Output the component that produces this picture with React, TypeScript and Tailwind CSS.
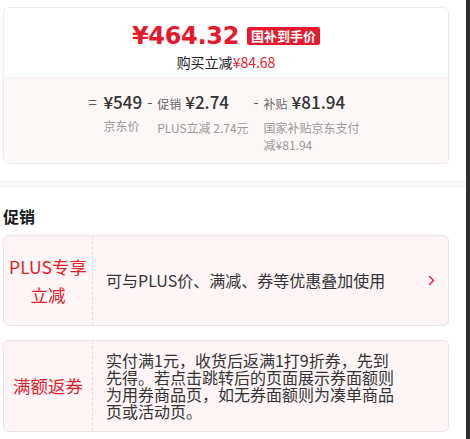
import React from "react";

const cjk = { fontFamily: '"Noto Sans CJK SC", "Noto Sans", sans-serif' };

function Chevron() {
  return (
    <svg width="7" height="11" viewBox="0 0 7 11" fill="none">
      <path d="M1.5 1.5 L5.5 5.5 L1.5 9.5" stroke="#e31d2d" strokeWidth="1.4" strokeLinecap="round" strokeLinejoin="round" />
    </svg>
  );
}

function PromoCard({ label, children, chevron }: { label: React.ReactNode; children: React.ReactNode; chevron?: boolean }) {
  return (
    <div className="flex min-h-[91px] w-[446px] rounded-[6px] border border-[#f2e1e4] bg-[#fdf5f6]">
      <div className="flex w-[89px] shrink-0 items-center justify-center border-r border-dashed border-[#efd6db] text-center text-[17.5px] leading-[28px] text-[#e31d2d]">
        {label}
      </div>
      <div className="flex flex-1 items-center justify-between py-[11px] pl-[13px] pr-[13px]">
        <div className="max-w-[292px] text-[16px] leading-[17px] text-[#333333]">{children}</div>
        {chevron && <Chevron />}
      </div>
    </div>
  );
}

export default function App() {
  return (
    <div className="flex h-[439px] w-[470px] overflow-hidden bg-white" style={cjk}>
      <div className="w-[466px]">
        <div className="pl-[3px] pt-[7px]">
          <div className="w-[446px] overflow-hidden rounded-[6px] border border-[#f1e6e8]">
            <div className="flex flex-col items-center bg-white pb-[6px] pt-[13px]">
              <div className="flex h-[30px] items-center gap-[8px]">
                <span
                  className="text-[24px] font-bold leading-[30px] tracking-[-0.3px] text-[#e8192c]"
                  style={{ fontFamily: '"DejaVu Sans", sans-serif' }}
                >
                  ¥464.32
                </span>
                <span className="rounded-[2px] bg-[#e8192c] px-[4px] text-[13px] font-bold leading-[18px] text-white">
                  国补到手价
                </span>
              </div>
              <div className="mt-[1px] text-[14px] leading-[20px] text-[#222222]">
                购买立减<span className="text-[#e8192c]">¥84.68</span>
              </div>
            </div>
            <div className="flex justify-center gap-[5px] border-t border-[#f6eced] bg-[#fdf8f8] pb-[10px] pt-[11px]">
              <div className="flex">
                <span className="w-[15px] text-[15px] leading-[24px] text-[#555555]">=</span>
                <div>
                  <div className="text-[17px] font-medium leading-[24px] text-[#333333]">¥549</div>
                  <div className="mt-[3px] text-[12px] leading-[17px] text-[#999999]">京东价</div>
                </div>
              </div>
              <div className="flex">
                <span className="w-[10px] text-[15px] leading-[24px] text-[#555555]">-</span>
                <div>
                  <div className="flex items-baseline leading-[24px]">
                    <span className="mr-[4px] text-[12px] text-[#666666]">促销</span>
                    <span className="text-[17px] font-medium text-[#333333]">¥2.74</span>
                  </div>
                  <div className="mt-[3px] text-[12px] leading-[17px] text-[#999999]">PLUS立减 2.74元</div>
                </div>
              </div>
              <div className="flex">
                <span className="w-[10px] text-[15px] leading-[24px] text-[#555555]">-</span>
                <div className="w-[100px]">
                  <div className="flex items-baseline leading-[24px]">
                    <span className="mr-[4px] shrink-0 text-[12px] text-[#666666]">补贴</span>
                    <span className="shrink-0 whitespace-nowrap text-[17px] font-medium text-[#333333]">¥81.94</span>
                  </div>
                  <div className="mt-[3px] text-[12px] leading-[17px] text-[#999999]">国家补贴京东支付减¥81.94</div>
                </div>
              </div>
            </div>
          </div>
        </div>
        <div className="mt-[16px] h-[8px] bg-[#f6f7fb]" />
        <div className="pl-[3px] pt-[17px]">
          <div className="text-[16px] font-bold leading-[22px] text-[#1a1a1a]">促销</div>
          <div className="mt-[8px] flex flex-col gap-[14px]">
            <PromoCard
              chevron
              label={
                <span>
                  PLUS专享
                  <br />
                  立减
                </span>
              }
            >
              可与PLUS价、满减、券等优惠叠加使用
            </PromoCard>
            <PromoCard label={<span>满额返券</span>}>
              实付满1元，收货后返满1打9折券，先到先得。若点击跳转后的页面展示券面额则为用券商品页，如无券面额则为凑单商品页或活动页。
            </PromoCard>
          </div>
        </div>
      </div>
      <div className="h-[439px] w-[4px] bg-[#2e2e2e]" />
    </div>
  );
}
